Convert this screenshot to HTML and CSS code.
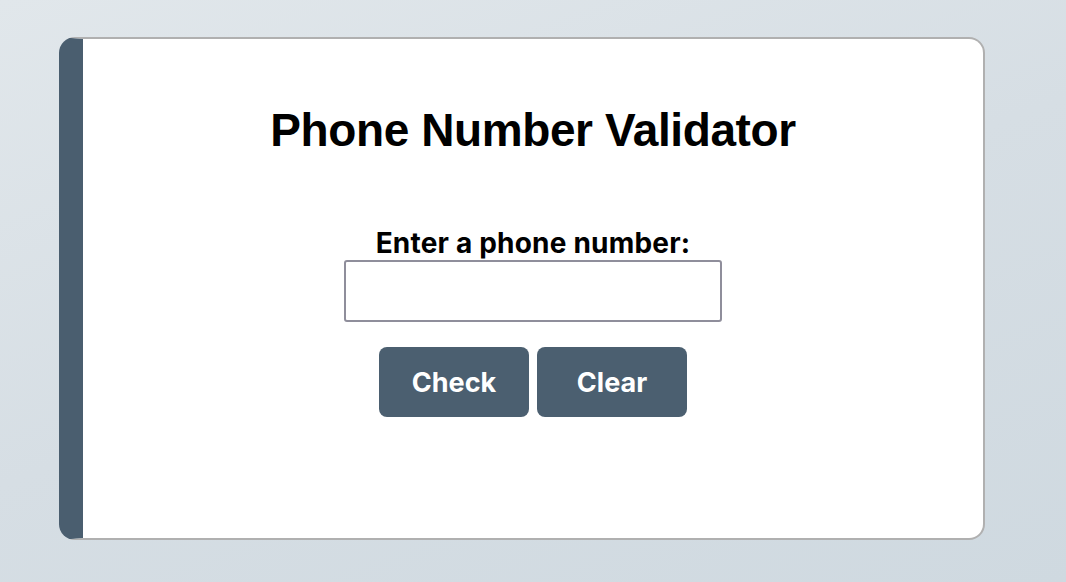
FILE: index.html
```html
<!DOCTYPE html>
<html>
<head>
<meta charset="utf-8">
<link rel="stylesheet" href="styles.css">
</head>
<body>
<div class="page">
  <main class="card">
    <h1 class="title">Phone Number Validator</h1>
    <div class="form">
      <label class="label" for="phone">Enter a phone number:</label>
      <input class="input" id="phone" type="text">
      <div class="buttons">
        <button class="btn">Check</button>
        <button class="btn">Clear</button>
      </div>
    </div>
  </main>
</div>
</body>
</html>
```
FILE: styles.css
```css
html, body {
  margin: 0;
  height: 100%;
}
body {
  background: linear-gradient(160deg, #e1e7eb 0%, #d6dee4 50%, #cfd9e0 100%);
  font-family: Inter, "Liberation Sans", sans-serif;
}
.page {
  padding: 37px 81px 0 59px;
}
.card {
  box-sizing: border-box;
  height: 503px;
  background: #fff;
  border: 2px solid #b0b0b0;
  border-left: 24px solid #4a5e6f;
  border-radius: 16px;
  display: flex;
  flex-direction: column;
  align-items: center;
  padding-top: 65px;
}
.title {
  margin: 0;
  font-family: "Liberation Sans", Arial, sans-serif;
  font-weight: bold;
  font-size: 46px;
  line-height: 53px;
  letter-spacing: -0.4px;
  color: #000;
}
.form {
  margin-top: 69px;
  display: flex;
  flex-direction: column;
  align-items: center;
}
.label {
  font-weight: 700;
  font-size: 28px;
  line-height: 34px;
  letter-spacing: 0.2px;
  color: #000;
}
.input {
  box-sizing: border-box;
  width: 378px;
  height: 62px;
  margin-top: 0;
  border: 2px solid #8f8e9b;
  border-radius: 3px;
  background: #fff;
}
.buttons {
  margin-top: 25px;
  display: flex;
  gap: 8px;
}
.btn {
  width: 150px;
  height: 70px;
  border: none;
  border-radius: 8px;
  background: #4b5f70;
  color: #fff;
  font-family: Inter, "Liberation Sans", sans-serif;
  font-weight: 700;
  font-size: 27px;
}
```
